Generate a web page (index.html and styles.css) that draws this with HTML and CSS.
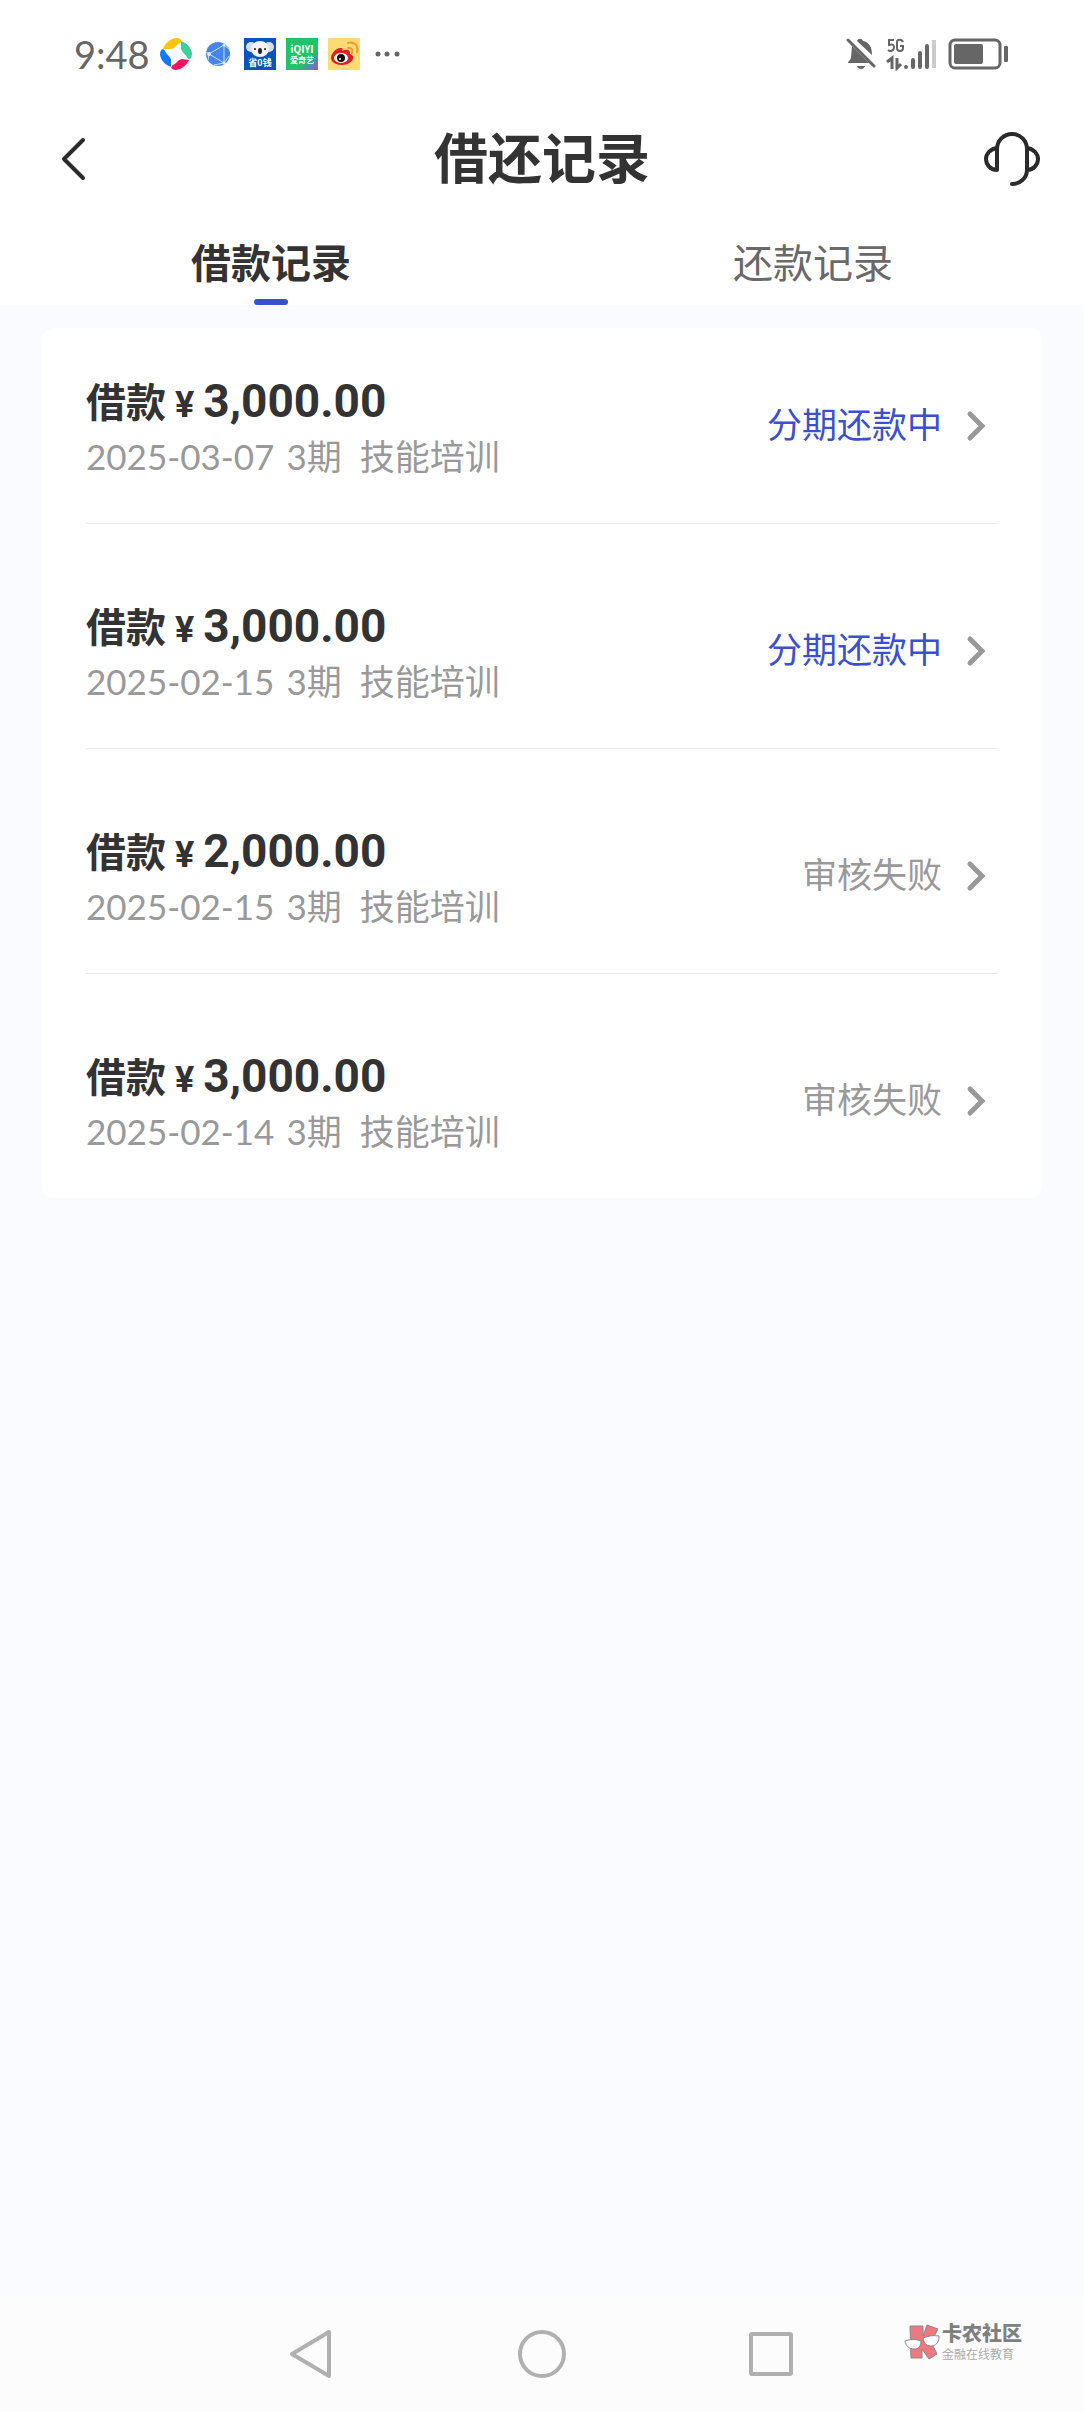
FILE: index.html
```html
<!DOCTYPE html>
<html lang="zh-CN">
<head>
    <meta charset="UTF-8">
    <meta name="viewport" content="width=device-width, initial-scale=1.0">
    <title>借还记录</title>
    <link rel="stylesheet" href="styles.css">
</head>
<body>
    <!-- 状态栏 -->
    <div class="status-bar">
        <div class="status-left">
            <span class="clock">9:48</span>
            <svg class="app-icon" viewBox="0 0 32 32">
                <path d="M3 11C5 5 10 1 16 0c5 0 7 3 4 5-4 2-6 6-9 6z" fill="#fdc20b"/>
                <path d="M21 3c6 2 10 7 11 12 0 6-3 8-5 4-2-3-6-6-6-9z" fill="#3fcf9a"/>
                <path d="M29 22c-2 5-7 9-13 10-5 0-6-3-3-5 4-2 6-6 9-6z" fill="#f5145d"/>
                <path d="M11 29C5 27 1 22 0 17c0-6 3-7 5-4 2 4 6 6 6 9z" fill="#1279f5"/>
            </svg>
            <svg class="app-icon" viewBox="0 0 32 32">
                <circle cx="16" cy="16" r="12" fill="#4585ea"/>
                <path d="M7 16L22 7v18zM4 14l3 2-1 6M22 7l5 4M22 25l5-7M12 27l10-2" fill="none" stroke="#c9dcfb" stroke-width="1"/>
                <circle cx="7" cy="16" r="2" fill="#dfeaff"/>
                <circle cx="22" cy="7" r="1.500" fill="#dfeaff"/>
                <circle cx="22" cy="25" r="1.500" fill="#dfeaff"/>
            </svg>
            <svg class="app-icon" viewBox="0 0 32 32">
                <rect width="32" height="32" fill="#0b53bd"/>
                <circle cx="7" cy="9" r="5" fill="#d9dde6"/>
                <circle cx="25" cy="9" r="5" fill="#d9dde6"/>
                <ellipse cx="16" cy="11" rx="9" ry="8" fill="#f1f3f8"/>
                <ellipse cx="16" cy="13" rx="2" ry="3" fill="#222"/>
                <circle cx="11" cy="11" r="1" fill="#222"/>
                <circle cx="21" cy="11" r="1" fill="#222"/>
                <text class="icon-text" x="16" y="28" font-size="9" fill="#fff" text-anchor="middle">省0钱</text>
            </svg>
            <svg class="app-icon" viewBox="0 0 32 32">
                <defs>
                    <linearGradient id="iqiyi" x1="0" y1="0" x2="1" y2="1">
                        <stop offset="0.650" stop-color="#1fc466"/>
                        <stop offset="0.800" stop-color="#4b91ae"/>
                        <stop offset="1" stop-color="#a04bea"/>
                    </linearGradient>
                </defs>
                <rect width="32" height="32" fill="url(#iqiyi)"/>
                <text class="icon-text" x="16" y="15" font-size="10" fill="#fff" text-anchor="middle">iQIYI</text>
                <text class="icon-text" x="16" y="25" font-size="8" fill="#fff" text-anchor="middle">爱奇艺</text>
            </svg>
            <svg class="app-icon" viewBox="0 0 32 32">
                <rect width="32" height="32" rx="1" fill="#fddb74"/>
                <path d="M3 20c0-5 6-11 10-10 2 0 2 2 1 3 3-2 9-2 8 3 3 1 4 3 3 5-2 5-8 6-12 6-5 0-10-3-10-7z" fill="#df1f26"/>
                <ellipse cx="13" cy="20" rx="7" ry="5" fill="#fff"/>
                <circle cx="13" cy="20" r="4" fill="#111"/>
                <circle cx="12" cy="21" r="1" fill="#fff"/>
                <path d="M20 10c3-1 5 2 4 5M20 5c6-2 11 3 9 9" fill="none" stroke="#f29a2e" stroke-width="2" stroke-linecap="round"/>
            </svg>
            <svg class="app-icon" viewBox="0 0 32 32">
                <g fill="#666"><circle cx="8" cy="16" r="2.500"/><circle cx="17" cy="16" r="2.500"/><circle cx="27" cy="16" r="2.500"/></g>
            </svg>
        </div>
        <div class="status-right">
            <svg width="30" height="34" viewBox="0 0 30 34">
                <path d="M6 9L23 26H2c0-2 3-3 3-6zM11 4c1-3 5-3 6 0 6 1 9 6 9 14zM11 29h8c-1 4-7 4-8 0z" fill="#666"/>
                <path d="M2 3l26 26" stroke="#666" stroke-width="3" stroke-linecap="round"/>
            </svg>
            <svg width="52" height="34" viewBox="0 0 52 34">
                <path d="M8 3H3v5c4-1 5 0 5 2 0 4-4 5-6 3M17 5c-1-3-6-3-6 0v6c0 4 6 4 6 0V9h-3" fill="none" stroke="#666" stroke-width="2"/>
                <path d="M1 25l5-4v11M11 21v10l4-4" fill="none" stroke="#666" stroke-width="3"/>
                <g stroke="#666" stroke-width="4" stroke-linecap="round"><path d="M20 30v0M27 23v7M34 16v14M41 9v21"/></g>
                <path d="M48 3v28" stroke="#ccc" stroke-width="4"/>
            </svg>
            <svg width="62" height="34" viewBox="0 0 62 34">
                <rect x="2" y="3" width="50" height="28" rx="5" fill="none" stroke="#666" stroke-width="3"/>
                <rect x="6" y="7" width="29" height="20" rx="2" fill="#666"/>
                <rect x="56" y="9" width="4" height="16" rx="1" fill="#666"/>
            </svg>
        </div>
    </div>

    <header class="header">
        <button class="icon-btn back" aria-label="返回">
            <svg width="28" height="48" viewBox="0 0 28 48">
                <path d="M23 5L4 24l19 19" fill="none" stroke="#2b2b2b" stroke-width="4" stroke-linecap="round" stroke-linejoin="round"/>
            </svg>
        </button>
        <h1>借还记录</h1>
        <button class="icon-btn" aria-label="客服">
            <svg width="56" height="56" viewBox="0 0 56 56">
                <path d="M13 39V18a15 15 0 0 1 30 0v21c0 8-7 14-15 14M13 17c-7 1-11 6-11 11s4 11 11 11M43 17c7 1 11 6 11 11s-4 11-11 11" fill="none" stroke="#2b2b2b" stroke-width="4" stroke-linecap="round" stroke-linejoin="round"/>
            </svg>
        </button>
    </header>

    <nav class="tabs">
        <a href="#loan" class="tab active">借款记录</a>
        <a href="#repay" class="tab">还款记录</a>
    </nav>

    <main class="content">
        <ul class="records">
            <li>
                <a href="#r1" class="record">
                    <div class="info">
                        <div class="title">借款<span class="yen">¥</span><span class="amount">3,000.00</span></div>
                        <div class="meta"><time>2025-03-07</time><span>3期</span><span class="purpose">技能培训</span></div>
                    </div>
                    <span class="state doing">分期还款中</span>
                    <svg class="arrow" viewBox="0 0 20 32"><path d="M4 4l12 12L4 28"/></svg>
                </a>
            </li>
            <li>
                <a href="#r2" class="record">
                    <div class="info">
                        <div class="title">借款<span class="yen">¥</span><span class="amount">3,000.00</span></div>
                        <div class="meta"><time>2025-02-15</time><span>3期</span><span class="purpose">技能培训</span></div>
                    </div>
                    <span class="state doing">分期还款中</span>
                    <svg class="arrow" viewBox="0 0 20 32"><path d="M4 4l12 12L4 28"/></svg>
                </a>
            </li>
            <li>
                <a href="#r3" class="record">
                    <div class="info">
                        <div class="title">借款<span class="yen">¥</span><span class="amount">2,000.00</span></div>
                        <div class="meta"><time>2025-02-15</time><span>3期</span><span class="purpose">技能培训</span></div>
                    </div>
                    <span class="state">审核失败</span>
                    <svg class="arrow" viewBox="0 0 20 32"><path d="M4 4l12 12L4 28"/></svg>
                </a>
            </li>
            <li>
                <a href="#r4" class="record">
                    <div class="info">
                        <div class="title">借款<span class="yen">¥</span><span class="amount">3,000.00</span></div>
                        <div class="meta"><time>2025-02-14</time><span>3期</span><span class="purpose">技能培训</span></div>
                    </div>
                    <span class="state">审核失败</span>
                    <svg class="arrow" viewBox="0 0 20 32"><path d="M4 4l12 12L4 28"/></svg>
                </a>
            </li>
        </ul>
    </main>

    <!-- 系统导航栏 -->
    <footer class="sys-nav">
        <button class="icon-btn" aria-label="返回">
            <svg width="48" height="48" viewBox="0 0 48 48"><path d="M40 2v44L3 24z"/></svg>
        </button>
        <button class="icon-btn" aria-label="主屏幕">
            <svg width="48" height="48" viewBox="0 0 48 48"><circle cx="24" cy="24" r="22"/></svg>
        </button>
        <button class="icon-btn" aria-label="最近任务">
            <svg width="48" height="48" viewBox="0 0 48 48"><rect x="4" y="4" width="40" height="40" rx="1"/></svg>
        </button>
        <div class="watermark">
            <svg width="36" height="36" viewBox="0 0 36 36">
                <path d="M6 2h13v10l4-11 11 4-7 13 6 12-8 5-7-10v9H7z" fill="#ee7880" stroke="#888" stroke-width="1"/>
                <path d="M1 17c5-2 11-2 16 0 0 6-3 8-7 8-5 0-8-3-9-8zM19 14c5-2 10-3 16-2 0 6-2 9-7 10-5 0-8-2-9-8z" fill="#fff" stroke="#888" stroke-width="1"/>
            </svg>
            <div>
                <div class="wm-name">卡农社区</div>
                <div class="wm-sub">金融在线教育</div>
            </div>
        </div>
    </footer>
</body>
</html>
```
FILE: styles.css
```css
* {
    box-sizing: border-box;
    margin: 0;
    padding: 0;
}

body {
    font-family: Lato, "Noto Sans CJK SC", sans-serif;
    min-height: 100vh;
    display: flex;
    flex-direction: column;
    background-color: #fafbff;
    color: #333;
}
a {
    color: inherit;
    text-decoration: none;
}
svg {
    display: block;
    flex: none;
}
.icon-btn {
    border: none;
    background: none;
    cursor: pointer;
}

/* 状态栏 */
.status-bar {
    display: flex;
    justify-content: space-between;
    align-items: center;
    height: 108px;
    padding: 0 74px;
    background-color: #fff;
}
.status-left,
.status-right {
    display: flex;
    align-items: center;
    gap: 10px;
}
.clock {
    font-size: 38px;
    color: #666;
}
.app-icon {
    width: 32px;
    height: 32px;
}
.icon-text {
    font-family: "Noto Sans CJK SC", sans-serif;
    font-weight: bold;
}

/* 标题 */
.header {
    display: flex;
    justify-content: space-between;
    align-items: center;
    height: 102px;
    padding: 0 44px;
    background-color: #fff;
}
.header .icon-btn {
    width: 56px;
}
.header .back {
    padding-left: 16px;
}
h1 {
    font-size: 54px;
    line-height: 80px;
}

/* 标签页 */
.tabs {
    display: flex;
    background-color: #fff;
}
.tab {
    flex: 1;
    display: flex;
    flex-direction: column;
    align-items: center;
    height: 95px;
    padding-top: 23px;
    font-size: 40px;
    line-height: 60px;
    color: #696969;
}
.tab.active {
    font-weight: bold;
    color: #333;
}
.tab.active::after {
    content: "";
    width: 34px;
    height: 6px;
    margin-top: auto;
    border-radius: 3px;
    background-color: #3b50ce;
}

/* 记录列表 */
.content {
    flex: 1;
    padding: 23px 42px;
}
.records {
    list-style: none;
    padding: 0 44px;
    border-radius: 12px;
    background-color: #fff;
}
.records li {
    padding: 72px 0 42px;
    border-bottom: 1px solid #e8e8e8;
}
.records li:first-child {
    padding-top: 43px;
}
.records li:last-child {
    border-bottom: none;
}
.record {
    display: flex;
    align-items: center;
    padding-right: 12px;
}
.info {
    flex: 1;
}
.title {
    display: flex;
    align-items: baseline;
    height: 60px;
    font-size: 40px;
    font-weight: bold;
    line-height: 60px;
}
.yen {
    margin: 0 9px;
    font-family: Roboto, sans-serif;
    font-size: 36px;
}
.amount {
    font-family: Roboto, sans-serif;
    font-size: 46px;
}
.meta {
    display: flex;
    align-items: baseline;
    gap: 12px;
    font-size: 35px;
    line-height: 50px;
    color: #999;
}
.purpose {
    margin-left: 6px;
}
.state {
    padding-bottom: 4px;
    font-size: 35px;
    line-height: 50px;
    color: #999;
}
.state.doing {
    color: #3b50ce;
}
.arrow {
    width: 20px;
    height: 32px;
    margin-left: 24px;
    fill: none;
    stroke: #999;
    stroke-width: 5;
    stroke-linecap: round;
}

/* 系统导航栏 */
.sys-nav {
    position: relative;
    display: flex;
    justify-content: center;
    align-items: center;
    gap: 181px;
    height: 116px;
    background-color: #fcfcfc;
}
.sys-nav .icon-btn svg {
    fill: none;
    stroke: #b0b0b0;
    stroke-width: 4;
    stroke-linejoin: round;
}
.watermark {
    position: absolute;
    right: 62px;
    top: 25px;
    display: flex;
    align-items: center;
    gap: 2px;
    font-family: "Noto Sans CJK SC", sans-serif;
}
.wm-name {
    font-size: 20px;
    font-weight: 900;
    line-height: 24px;
    color: #808080;
}
.wm-sub {
    font-size: 12px;
    line-height: 18px;
    color: #aaa;
}
```
